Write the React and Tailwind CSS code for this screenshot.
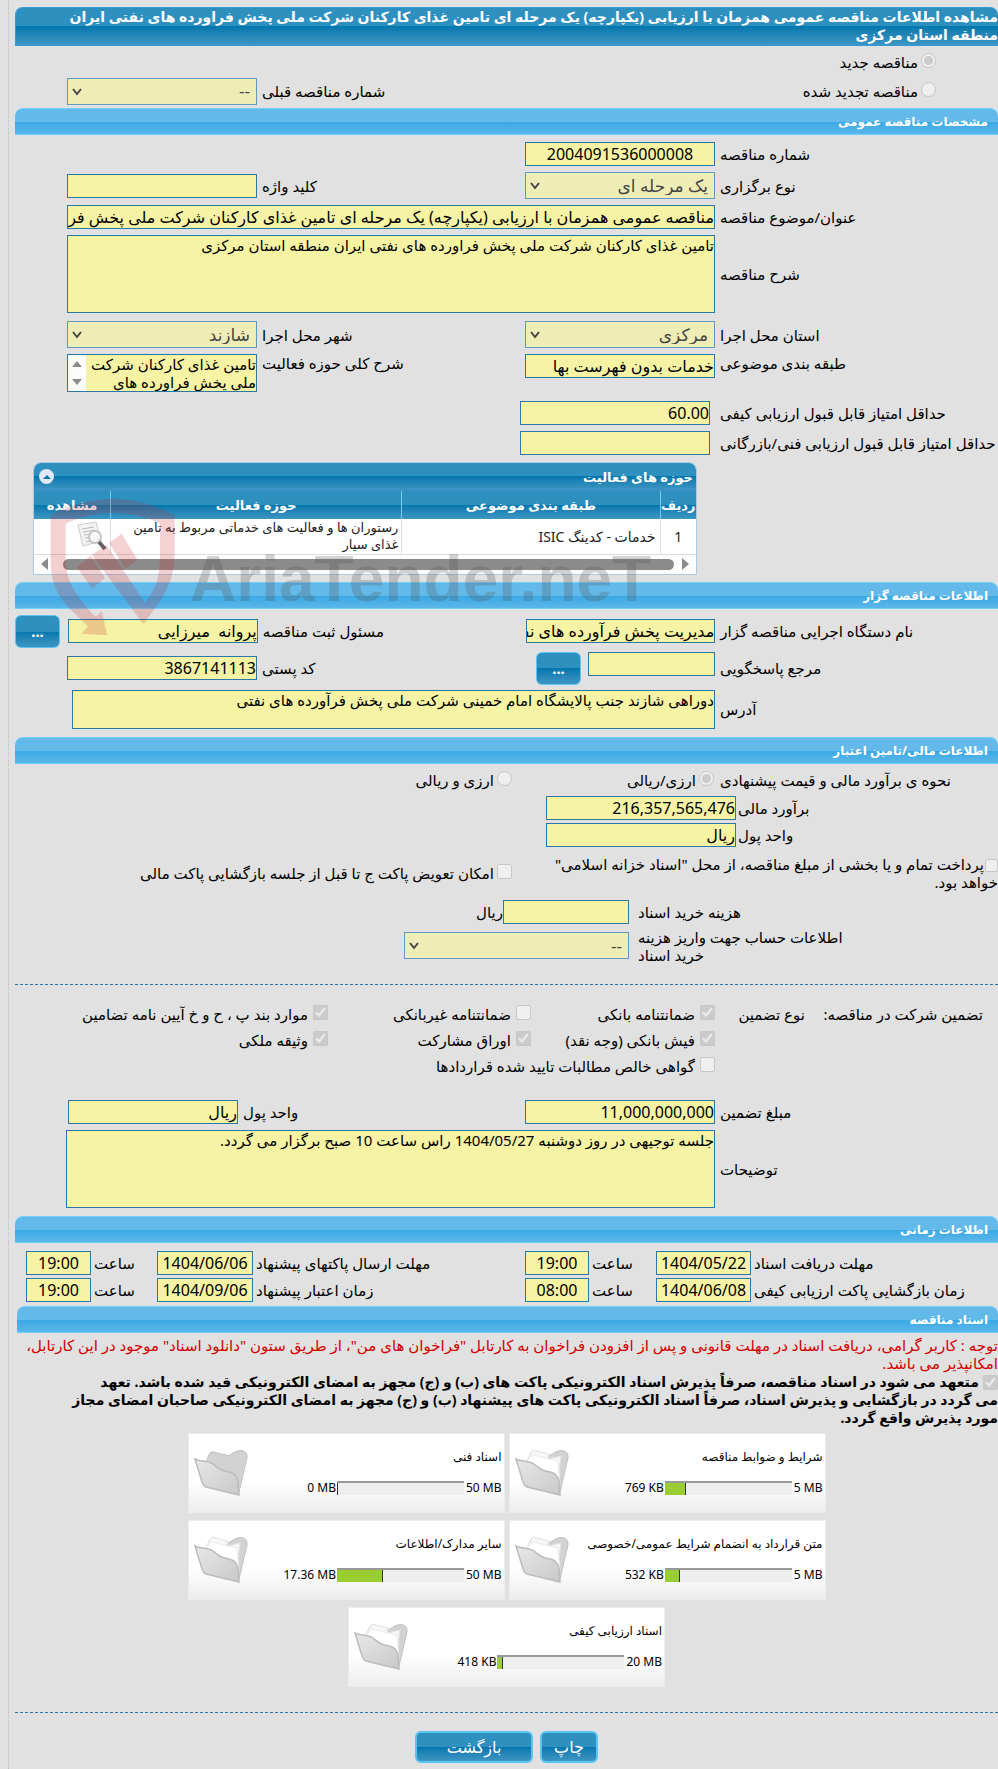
const grid = 'grid grid-cols-[283fr_190fr_268fr_190fr_52fr]'
const box = 'block w-full min-w-0 border border-[#2a78a8] bg-[#f6f4a4] text-black outline-none'
const dates = [
  {
    id: 'receive', label: 'مهلت دریافت اسناد', date: '1404/05/22', time: '19:00',
    id2: 'send', label2: 'مهلت ارسال پاکتهای پیشنهاد', date2: '1404/06/06', time2: '19:00',
  },
  {
    id: 'open', label: 'زمان بازگشایی پاکت ارزیابی کیفی', date: '1404/06/08', time: '08:00',
    id2: 'valid', label2: 'زمان اعتبار پیشنهاد', date2: '1404/09/06', time2: '19:00',
  },
]

export default function App() {
  return (
    <div dir="rtl" className="overflow-hidden bg-[#e1e1e1] pl-2 text-[15px] leading-[18px] text-black font-['Noto_Sans','DejaVu_Sans',sans-serif]">
      <div className="min-h-screen border-l border-dotted border-[#bdbdbd] pt-[7px] pb-[5px] pl-[6px]">
        <h1 className="min-h-[39px] rounded-t-lg border border-r-0 border-[#3498db] bg-linear-to-b from-[#2e90bf] from-50% via-[#0077ad] via-50% to-[#3c96c3] text-[14px] font-bold text-white">
          مشاهده اطلاعات مناقصه عمومی همزمان با ارزیابی (یکپارچه) یک مرحله ای تامین غذای کارکنان شرکت ملی پخش فراورده های نفتی ایران منطقه&nbsp;استان&nbsp;مرکزی
        </h1>

        <div className="mt-1 flex h-6 items-center pr-[62px]">
          <Option type="radio" name="kind" id="kind-new" checked>مناقصه جدید</Option>
        </div>
        <div className={`${grid} h-[34px] items-center`}>
          <div className="pr-[62px]">
            <Option type="radio" name="kind" id="kind-renewed">مناقصه تجدید شده</Option>
          </div>
          <span />
          <Label htmlFor="previous">شماره مناقصه قبلی</Label>
          <Select id="previous" value="--" />
        </div>

        <Bar>مشخصات مناقصه عمومی</Bar>
        <div className={`${grid} mt-[7px] items-center`}>
          <Label htmlFor="number">شماره مناقصه</Label>
          <Input id="number" value="2004091536000008" center />
        </div>
        <div className={`${grid} mt-[6px] items-center`}>
          <Label htmlFor="method">نوع برگزاری</Label>
          <Select id="method" value="یک مرحله ای" />
          <Label htmlFor="keyword">کلید واژه</Label>
          <Input id="keyword" value="" />
        </div>
        <div className={`${grid} mt-[6px] items-center`}>
          <Label htmlFor="subject">عنوان/موضوع مناقصه</Label>
          <div className="col-span-3">
            <Input id="subject" value="مناقصه عمومی همزمان با ارزیابی (یکپارچه) یک مرحله ای تامین غذای کارکنان شرکت ملی پخش فراورده های نفتی ایران منطقه استان مرکزی" />
          </div>
        </div>
        <div className={`${grid} mt-[6px] items-center`}>
          <Label htmlFor="description">شرح مناقصه</Label>
          <textarea id="description" readOnly className={`${box} col-span-3 h-[78px] resize-none`} value="تامین غذای کارکنان شرکت ملی پخش فراورده های نفتی ایران منطقه استان مرکزی" />
        </div>
        <div className={`${grid} mt-2 items-center`}>
          <Label htmlFor="province">استان محل اجرا</Label>
          <Select id="province" value="مرکزی" />
          <Label htmlFor="city">شهر محل اجرا</Label>
          <Select id="city" value="شازند" />
        </div>
        <div className={`${grid} mt-[6px] items-start`}>
          <Label htmlFor="category">طبقه بندی موضوعی</Label>
          <Input id="category" value="خدمات بدون فهرست بها" />
          <Label htmlFor="scope">شرح کلی حوزه فعالیت</Label>
          <div className="relative">
            <textarea id="scope" readOnly className={`${box} h-[38px] resize-none overflow-hidden pl-[18px]`} value="تامین غذای کارکنان شرکت ملی پخش فراورده های" />
            <div className="absolute inset-y-px left-px flex w-[18px] flex-col items-center justify-between bg-[#fcfcfc] py-[6px]">
              <svg className="h-[6px] w-[10px]" viewBox="0 0 10 6"><path d="M5 0 10 6H0z" fill="#8b8b8b" /></svg>
              <svg className="h-[6px] w-[10px]" viewBox="0 0 10 6"><path d="M0 0h10L5 6z" fill="#8b8b8b" /></svg>
            </div>
          </div>
        </div>
        <div className="mt-[9px] grid grid-cols-[288fr_190fr_505fr] items-center gap-y-[6px]">
          <Label htmlFor="quality" wide>حداقل امتیاز قابل قبول ارزیابی کیفی</Label>
          <Input id="quality" value="60.00" />
          <span />
          <Label htmlFor="technical" wide>حداقل امتیاز قابل قبول ارزیابی فنی/بازرگانی</Label>
          <Input id="technical" value="" />
        </div>

        <Activities />

        <Bar>اطلاعات مناقصه گزار</Bar>
        <div className={`${grid} mt-[6px] items-center`}>
          <Label htmlFor="agency">نام دستگاه اجرایی مناقصه گزار</Label>
          <Input id="agency" value="مدیریت پخش فرآورده های نفتی منطقه مرکزی" />
          <Label htmlFor="registrar">مسئول ثبت مناقصه</Label>
          <Input id="registrar" value="پروانه  میرزایی" />
          <div className="pr-2"><MoreButton label="جزئیات مسئول ثبت" /></div>
        </div>
        <div className={`${grid} mt-1 items-center`}>
          <Label htmlFor="responder">مرجع پاسخگویی</Label>
          <div className="flex items-start gap-[7px] pl-[11px]">
            <Input id="responder" value="" />
            <MoreButton label="جزئیات مرجع پاسخگویی" />
          </div>
          <Label htmlFor="postcode">کد پستی</Label>
          <Input id="postcode" value="3867141113" />
        </div>
        <div className="mt-[5px] grid grid-cols-[283fr_643fr_57fr] items-center">
          <Label htmlFor="address">آدرس</Label>
          <textarea id="address" readOnly className={`${box} h-[39px] resize-none`} value="دوراهی شازند جنب پالایشگاه امام خمینی شرکت ملی پخش فرآورده های نفتی" />
        </div>

        <div className="mt-2"><Bar>اطلاعات مالی/تامین اعتبار</Bar></div>
        <div className="mt-1 grid h-6 grid-cols-[284fr_202fr_497fr] items-center">
          <span className="pl-[6px] text-left whitespace-nowrap">نحوه ی برآورد مالی و قیمت پیشنهادی</span>
          <Option type="radio" name="currency" id="rial" checked>ارزی/ریالی</Option>
          <Option type="radio" name="currency" id="mixed">ارزی و ریالی</Option>
        </div>
        <div className="mt-1 grid grid-cols-[262fr_190fr_531fr] items-center gap-y-[3px]">
          <label htmlFor="estimate" className="pl-[2px] text-left">برآورد مالی</label>
          <Input id="estimate" value="216,357,565,476" />
          <span />
          <label htmlFor="unit" className="pl-[2px] text-left">واحد پول</label>
          <Input id="unit" value="ریال" />
        </div>
        <div className="mt-2 grid grid-cols-[486fr_497fr] items-center">
          <div className="pl-6">
            <input type="checkbox" id="treasury" disabled className="ml-px size-[13px] align-middle" />
            <label htmlFor="treasury">پرداخت تمام و یا بخشی از مبلغ مناقصه، از محل "اسناد خزانه اسلامی" خواهد&nbsp;بود.</label>
          </div>
          <Option type="checkbox" id="swap">امکان تعویض پاکت ج تا قبل از جلسه بازگشایی پاکت مالی</Option>
        </div>
        <div className="mt-[9px] grid grid-cols-[369fr_126fr_488fr] items-center">
          <label htmlFor="fee" className="pl-[9px] text-left">هزینه خرید اسناد</label>
          <Input id="fee" value="" />
          <span>ریال</span>
        </div>
        <div className="mt-1 grid grid-cols-[369fr_225fr_389fr] items-center">
          <label htmlFor="account" className="mr-[148px] ml-[9px] text-left">اطلاعات حساب جهت واریز هزینه خرید&nbsp;اسناد</label>
          <Select id="account" value="--" />
        </div>

        <hr className="mt-[20px] border-dashed border-[#2a78a8]" />

        <div className="mt-5 grid grid-cols-[178fr_105fr_184fr_203fr_313fr] items-start gap-y-px">
          <span className="pr-[15px] whitespace-nowrap">تضمین شرکت در مناقصه:</span>
          <span className="pr-[15px] whitespace-nowrap">نوع تضمین</span>
          <Option type="checkbox" id="g1" checked spaced>ضمانتنامه بانکی</Option>
          <Option type="checkbox" id="g2" spaced>ضمانتنامه غیربانکی</Option>
          <Option type="checkbox" id="g3" checked spaced>موارد بند پ ، ح و خ آیین نامه تضامین</Option>
          <span className="col-span-2" />
          <Option type="checkbox" id="g4" checked spaced>فیش بانکی (وجه نقد)</Option>
          <Option type="checkbox" id="g5" checked spaced>اوراق مشارکت</Option>
          <Option type="checkbox" id="g6" checked spaced>وثیقه ملکی</Option>
          <span className="col-span-2" />
          <div className="col-span-3">
            <Option type="checkbox" id="g7" spaced>گواهی خالص مطالبات تایید شده قراردادها</Option>
          </div>
        </div>

        <div className="mt-[18px] grid grid-cols-[283fr_190fr_287fr_170fr_53fr] items-center">
          <Label htmlFor="amount">مبلغ تضمین</Label>
          <Input id="amount" value="11,000,000,000" />
          <Label htmlFor="amount-unit">واحد پول</Label>
          <Input id="amount-unit" value="ریال" />
        </div>
        <div className="mt-[6px] grid grid-cols-[283fr_649fr_51fr] items-center">
          <Label htmlFor="notes">توضیحات</Label>
          <textarea id="notes" readOnly className={`${box} h-[78px] resize-none`} value="جلسه توجیهی در روز دوشنبه 1404/05/27 راس ساعت 10 صبح برگزار می گردد." />
        </div>

        <div className="mt-2"><Bar>اطلاعات زمانی</Bar></div>
        <div className="mt-2 flex flex-col gap-[3px]">
          {dates.map((d) => (
            <div key={d.id} className="grid grid-cols-[247fr_95fr_67fr_64fr_272fr_96fr_66fr_65fr_11fr] items-center">
              <label htmlFor={d.id} className="pl-[3px] text-left whitespace-nowrap">{d.label}</label>
              <Input id={d.id} value={d.date} center />
              <label htmlFor={`${d.id}-time`} className="pl-[3px] text-left">ساعت</label>
              <Input id={`${d.id}-time`} value={d.time} center />
              <label htmlFor={d.id2} className="pl-[3px] text-left">{d.label2}</label>
              <Input id={d.id2} value={d.date2} center />
              <label htmlFor={`${d.id2}-time`} className="pl-[3px] text-left">ساعت</label>
              <Input id={`${d.id2}-time`} value={d.time2} center />
            </div>
          ))}
        </div>

        <div className="mt-1 pl-[2px]"><Bar>اسناد مناقصه</Bar></div>
        <p className="mt-[3px] text-[#d40000]">
          توجه : کاربر گرامی، دریافت اسناد در مهلت قانونی و پس از افزودن فراخوان به کارتابل "فراخوان های من"، از طریق ستون "دانلود اسناد" موجود در این کارتابل، امکانپذیر می باشد.
        </p>
        <div className="mt-px text-[14px] font-bold">
          <input type="checkbox" id="commit" checked readOnly disabled className="ml-1 size-[15px] align-middle" />
          <label htmlFor="commit">متعهد می شود در اسناد مناقصه، صرفاً پذیرش اسناد الکترونیکی پاکت های (ب) و (ج) مجهز به امضای الکترونیکی قید شده باشد. تعهد می&nbsp;گردد&nbsp;در&nbsp;بازگشایی و پذیرش اسناد، صرفاً اسناد الکترونیکی پاکت های پیشنهاد (ب) و (ج) مجهز به امضای الکترونیکی صاحبان امضای مجاز مورد&nbsp;پذیرش&nbsp;واقع&nbsp;گردد.</label>
        </div>

        <div className="mx-auto mt-[6px] flex max-w-[644px] flex-wrap justify-center gap-x-1 gap-y-[7px]">
          <FileCard title="شرایط و ضوابط مناقصه" max="5 MB" used="769 KB" percent={17} />
          <FileCard title="اسناد فنی" max="50 MB" used="0 MB" percent={1} empty />
          <FileCard title="متن قرارداد به انضمام شرایط عمومی/خصوصی" max="5 MB" used="532 KB" percent={12} />
          <FileCard title="سایر مدارک/اطلاعات" max="50 MB" used="17.36 MB" percent={36} />
          <FileCard title="اسناد ارزیابی کیفی" max="20 MB" used="418 KB" percent={4} />
        </div>

        <hr className="mt-[25px] border-dashed border-[#2a78a8]" />
        <div className="mt-[18px] flex justify-center gap-[7px]">
          <ActionButton>چاپ</ActionButton>
          <ActionButton wide>بازگشت</ActionButton>
        </div>
      </div>
    </div>
  )
}

function Bar({ children }) {
  return (
    <h2 className="h-[27px] rounded-t-lg border-y border-[#6fd0f8] bg-linear-to-b from-[#63baea] from-50% via-[#38a8e3] via-50% to-[#5ab7ea] pr-[10px] text-[12px] leading-[26px] font-bold text-white">
      {children}
    </h2>
  )
}

function Label({ htmlFor, wide, children }) {
  return (
    <label htmlFor={htmlFor} className={`${wide ? 'pl-[10px]' : 'pl-[5px]'} min-w-0 text-left whitespace-nowrap`}>
      {children}
    </label>
  )
}

function Input({ id, value, center }) {
  return <input id={id} type="text" readOnly value={value} className={`${box} h-6 text-[16px] ${center ? 'text-center' : ''}`} />
}

function Select({ id, value }) {
  return (
    <div className="relative">
      <select id={id} disabled className="block h-[27px] w-full appearance-none border border-[#5d9abf] bg-[#efedb6] pr-[6px] pl-6 text-[17px] text-[#444] opacity-100">
        <option>{value}</option>
      </select>
      <svg className="pointer-events-none absolute top-[10px] left-[5px] h-2 w-[10px]" viewBox="0 0 10 8" fill="none" stroke="#444" strokeWidth="2">
        <path d="m1 1 4 5 4-5" />
      </svg>
    </div>
  )
}

function Option({ type, name, id, checked = false, spaced, children }) {
  return (
    <div className={`flex items-start whitespace-nowrap ${spaced ? 'h-[25px] gap-[5px]' : 'gap-[3px]'}`}>
      <input type={type} name={name} id={id} checked={checked} readOnly disabled className="size-[15px] shrink-0" />
      <label htmlFor={id}>{children}</label>
    </div>
  )
}

function MoreButton({ label }) {
  return (
    <button type="button" aria-label={label} className="h-[33px] w-[45px] shrink-0 rounded-md border border-[#5cc4f0] bg-linear-to-b from-[#2e90bf] from-50% via-[#0077ad] via-50% to-[#3c96c3] text-[15px] font-bold text-white">
      ...
    </button>
  )
}

function ActionButton({ wide, children }) {
  return (
    <button type="button" className={`${wide ? 'w-[118px]' : 'w-[58px]'} h-8 rounded-md border-2 border-[#5cc4f0] bg-linear-to-b from-[#2e90bf] from-50% via-[#0077ad] via-50% to-[#3c96c3] text-[16px] text-white`}>
      {children}
    </button>
  )
}

function Activities() {
  const head = 'bg-linear-to-b from-[#2e90bf] from-50% via-[#0077ad] via-50% to-[#3c96c3]'
  return (
    <div className="relative mt-[7px] mb-[7px] grid grid-cols-[301fr_664fr_18fr]">
      <div className="col-start-2 overflow-hidden rounded-t-lg border border-[#a9cbe4] bg-white">
        <div className={`${head} flex h-[28px] items-center justify-between border-b border-[#3b8fd0] pr-[3px] pl-[5px]`}>
          <h3 className="text-[13px] font-bold text-white">حوزه های فعالیت</h3>
          <button type="button" aria-label="بستن" className="flex size-[15px] items-center justify-center rounded-full bg-[#dfe8f8]">
            <svg className="h-1 w-2" viewBox="0 0 8 4"><path d="m4 0 4 4H0z" fill="#0e76a8" /></svg>
          </button>
        </div>
        <table className="w-full table-fixed">
          <colgroup>
            <col className="w-[36px]" />
            <col className="w-[39%]" />
            <col className="w-[44%]" />
            <col />
          </colgroup>
          <thead>
            <tr className={`${head} h-[28px] text-[13px] text-white`}>
              <th className="border-l border-[#74cdf3]">ردیف</th>
              <th className="border-l border-[#74cdf3]">طبقه بندی موضوعی</th>
              <th className="border-l border-[#74cdf3]">حوزه فعالیت</th>
              <th>مشاهده</th>
            </tr>
          </thead>
          <tbody>
            <tr className="h-[35px] border-b border-[#ddd] text-[14px] leading-[17px] text-[#222]">
              <td className="border-l border-[#ddd] text-center">1</td>
              <td className="border-l border-[#ddd] pr-1">خدمات - کدینگ ISIC</td>
              <td className="border-l border-[#ddd] pr-[3px] pl-1 text-[13px]">رستوران ها و فعالیت های خدماتی مربوط به تامین غذای&nbsp;سیار</td>
              <td className="pr-[3px]">
                <svg className="h-[30px] w-[30px]" viewBox="0 0 30 30" fill="none">
                  <path d="M1 4 19 1l5 19-18 5z" fill="#f3f3f3" stroke="#ccc" />
                  <path d="m5 8 12-2M6 11l12-2M7 14l7-1M8 17l5-1M9 21l5-1" stroke="#bbb" />
                  <circle cx="18" cy="16" r="6" fill="#f8f8f8" stroke="#c5c5c5" strokeWidth="2" />
                  <path d="m22 21 6 7" stroke="#666" strokeWidth="4" />
                </svg>
              </td>
            </tr>
          </tbody>
        </table>
        <div className="flex h-[19px] items-center gap-[15px] bg-[#fdfdfd] px-[7px]">
          <svg className="-ml-[7px] h-3 w-[7px]" viewBox="0 0 7 12"><path d="m0 0 7 6-7 6z" fill="#8b8b8b" /></svg>
          <div className="h-[11px] flex-1 rounded-full bg-[#8b8b8b]" />
          <svg className="h-3 w-[7px]" viewBox="0 0 7 12"><path d="M7 0 0 6l7 6z" fill="#8b8b8b" /></svg>
        </div>
      </div>
      <Watermark />
    </div>
  )
}

function Watermark() {
  return (
    <div dir="ltr" className="pointer-events-none absolute top-[36px] left-[35px] z-10 flex w-[600px] items-start" aria-hidden="true">
      <svg className="h-[138px] w-[125px] shrink-0" viewBox="88 133 375 414" fill="#c8202a" fillOpacity=".2">
        <path d="M90 185Q275 85 462 185V290C462 390 430 430 368 511L213 303l45-28 115 172c35-45 45-80 45-150v-88Q275 145 135 210v105c0 75 40 120 90 175l18-18 17 73-78-5 20-22C145 460 90 430 90 320z" />
        <path d="m168 340 42-34 43 67-38 32zM265 268l38-28 47 78-35 27z" />
      </svg>
      <span className="mt-[36px] ml-[15px] font-['Liberation_Sans_Narrow','Liberation_Sans',sans-serif] text-[64px] leading-[90px] font-bold text-[#505050]/25">AriaTender.neT</span>
    </div>
  )
}

function FileCard({ title, max, used, percent, empty }) {
  return (
    <div className="flex h-20 w-[317px] items-center border border-[#ececec] bg-linear-to-b from-white from-60% to-[#ededed] pr-[2px] pl-[5px] text-[12px]">
      <div className="min-w-0 flex-1 self-start pt-[14px]">
        <h3 className="whitespace-nowrap">{title}</h3>
        <div dir="ltr" className="mt-[13px] flex items-center justify-end gap-px">
          <span>{used}</span>
          <div className="h-[14px] w-[127px] border-t-2 border-[#999] bg-[#eee]">
            <div className="h-full border-r border-[#333] bg-[#9acd32]" style={{ width: `${percent}%` }} />
          </div>
          <span className="pl-px">{max}</span>
        </div>
      </div>
      <Folder empty={empty} />
    </div>
  )
}

function Folder({ empty }) {
  return (
    <svg className="-mr-[54px] h-[48px] w-[54px] shrink-0" viewBox="0 0 54 48">
      <defs>
        <linearGradient id="folder" x1="0" y1="0" x2="1" y2="1">
          <stop offset="0" stopColor="#e8e8e8" />
          <stop offset="1" stopColor="#c9c9c9" />
        </linearGradient>
      </defs>
      <path d="M13 11c2-6 3-9 6-8l13 3c3 1 4 0 7-2 8-5 15-2 14 5l-8 34-2 3-30-24z" fill="#d2d2d2" stroke="#c2c2c2" />
      {!empty && (
        <>
          <path d="m13 9 5-8 16 4-1 5 13-3-4 33-29-20z" fill="#f7f7f7" stroke="#e2e2e2" />
          <path d="m11 13 7-7 25 6 2 23-30-11z" fill="#fff" stroke="#ebebeb" />
        </>
      )}
      <path d="M1 10c5 3 12 1 18 5 5 4 8 7 16 8 6 1 8 5 9 9l1 14-33-8c-2-1-3-2-4-5z" fill="url(#folder)" stroke="#bcbcbc" strokeWidth="1.5" />
    </svg>
  )
}
